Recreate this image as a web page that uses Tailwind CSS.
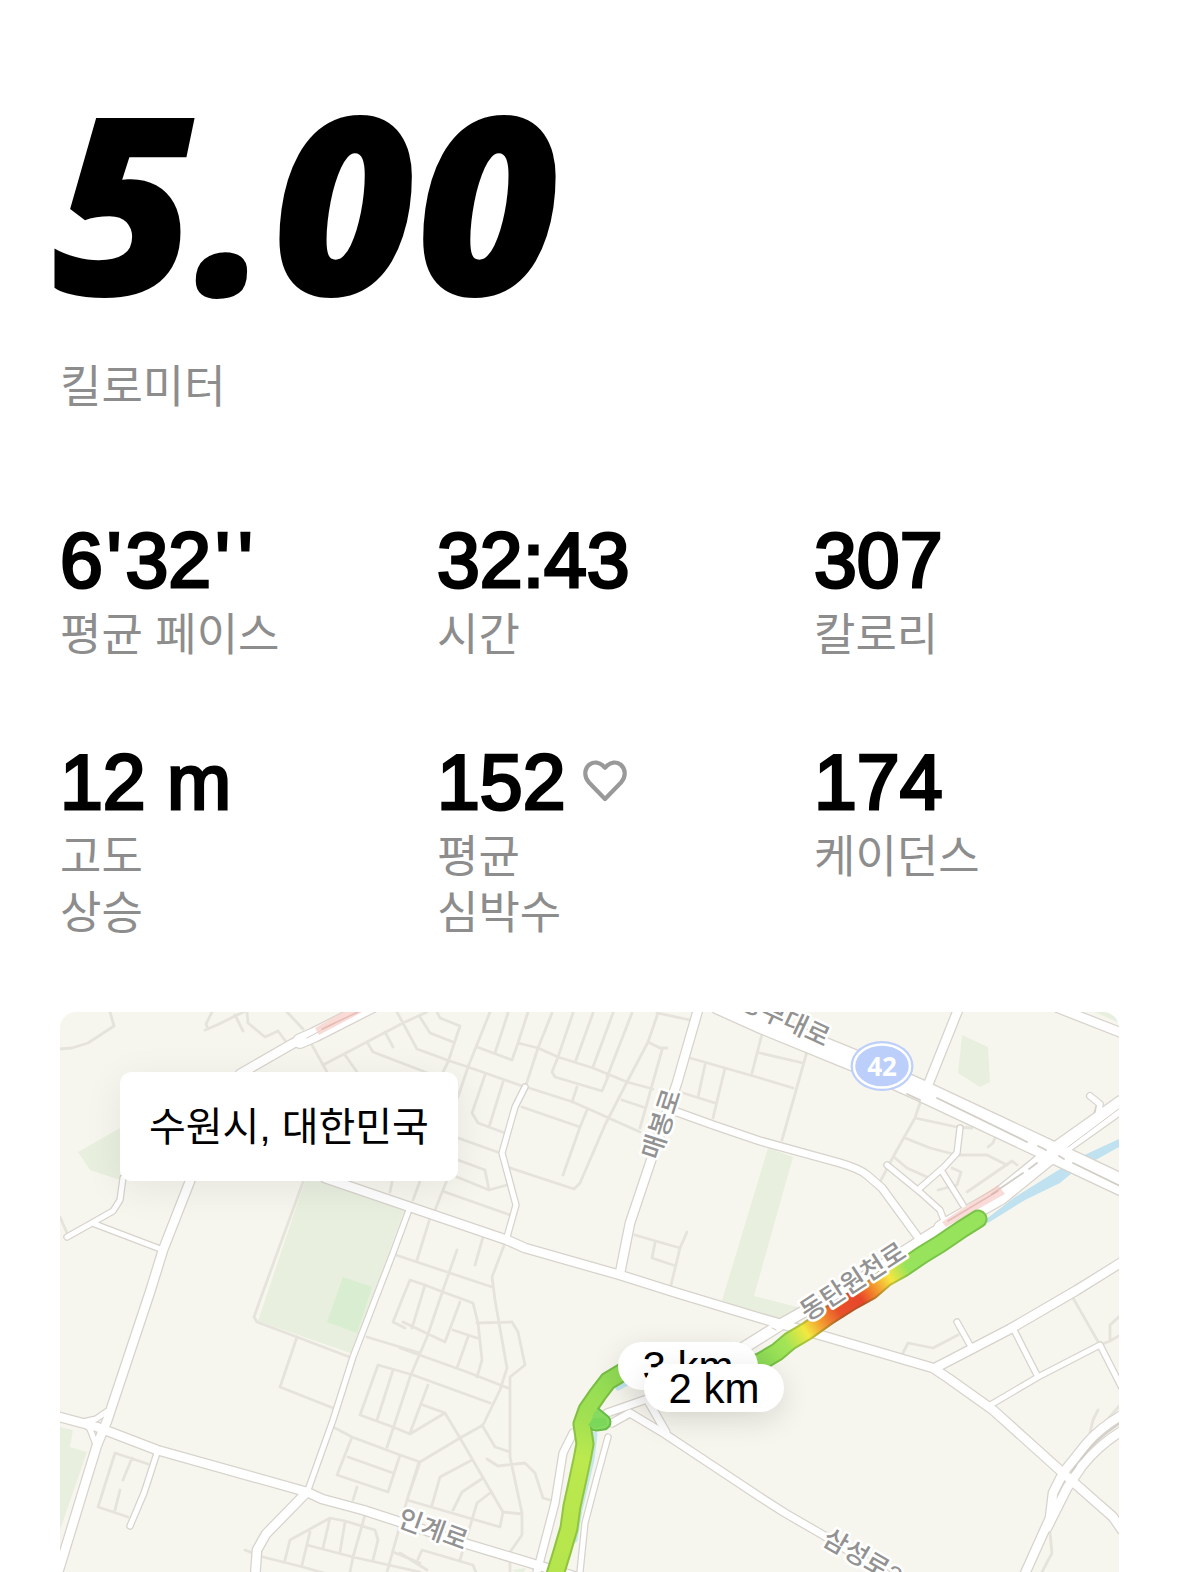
<!DOCTYPE html>
<html lang="ko">
<head>
  <meta charset="UTF-8">
  <meta name="viewport" content="width=device-width, initial-scale=1">
  <title>5.00 킬로미터</title>
  <script src="https://cdn.jsdelivr.net/npm/@tailwindcss/browser@4"></script>
</head>
<body class="bg-white text-black font-['Liberation_Sans','Noto_Sans_CJK_KR',sans-serif]">
  <main class="min-h-screen flex flex-col px-15 pt-28">

    <!-- Distance -->
    <header class="flex flex-col gap-18">
      <h1 class="-ml-2 text-[248px] leading-[176px] font-black italic font-['Noto_Sans',sans-serif]">5.00</h1>
      <p class="text-[45px] leading-14 text-[#8d8d8d]">킬로미터</p>
    </header>

    <!-- Stats -->
    <dl class="mt-27 grid grid-cols-3 gap-x-18 gap-y-[82px]">
      <div class="flex flex-col gap-3">
        <dd class="text-[77px] leading-18 whitespace-nowrap [-webkit-text-stroke:3px_black]">6<span class="mx-1">'</span>32<span class="mx-1">'</span><span class="mx-1">'</span></dd>
        <dt class="text-[45px] leading-14 text-[#8d8d8d]">평균 페이스</dt>
      </div>
      <div class="flex flex-col gap-3">
        <dd class="text-[77px] leading-18 whitespace-nowrap [-webkit-text-stroke:3px_black]">32:43</dd>
        <dt class="text-[45px] leading-14 text-[#8d8d8d]">시간</dt>
      </div>
      <div class="flex flex-col gap-3">
        <dd class="text-[77px] leading-18 whitespace-nowrap [-webkit-text-stroke:3px_black]">307</dd>
        <dt class="text-[45px] leading-14 text-[#8d8d8d]">칼로리</dt>
      </div>
      <div class="flex flex-col gap-3">
        <dd class="text-[77px] leading-18 whitespace-nowrap [-webkit-text-stroke:3px_black]">12 m</dd>
        <dt class="text-[45px] leading-14 text-[#8d8d8d]">고도<br>상승</dt>
      </div>
      <div class="flex flex-col gap-3">
        <dd class="flex items-center gap-4 text-[77px] leading-18 whitespace-nowrap [-webkit-text-stroke:3px_black]">
          152
          <svg class="size-12" viewBox="0 0 48 48" fill="none" stroke="#999" stroke-width="4.2" stroke-linejoin="round" aria-hidden="true">
            <path d="M24 41 L8 24.500 C2.500 18.500 3.500 10.500 8.500 6.500 C13 3.200 18.500 4.200 22 7.800 L24 9.800 L26 7.800 C29.500 4.200 35 3.200 39.500 6.500 C44.500 10.500 45.500 18.500 40 24.500 Z" />
          </svg>
        </dd>
        <dt class="text-[45px] leading-14 text-[#8d8d8d]">평균<br>심박수</dt>
      </div>
      <div class="flex flex-col gap-3">
        <dd class="text-[77px] leading-18 whitespace-nowrap [-webkit-text-stroke:3px_black]">174</dd>
        <dt class="text-[45px] leading-14 text-[#8d8d8d]">케이던스</dt>
      </div>
    </dl>

    <!-- Route map -->
    <section class="relative mt-[70px] flex-1 min-h-[550px] overflow-hidden rounded-t-2xl bg-[#f7f6ee]">
      <svg class="absolute inset-0 size-full" viewBox="0 2 1059 566" preserveAspectRatio="xMinYMin slice" fill="none" stroke-linecap="round" stroke-linejoin="round">
        <defs>
          <path id="wide" d="M180 64 L232 34 L300 0 M160 80 L130 171 L103 240 L90 282 L47 411 L37 435 L-3 566 M265 168 L350 197 L447 230 L465 238 L560 265 L617 283 L700 308 L767 327 L873 358 L888 368 L933 400 L1003 463 L1053 507 L1062 520 M-4 406 L37 417 L97 440 L247 482 L262 489 L303 500 L340 512 L407 534 L477 555 L520 568 M247 482 L206 524 L197 540 L195 568 M638 0 L617 73 L570 213 L560 263 M868 75 L898 0 M998 -2 L1062 23 M1062 252 L1017 280 L950 319 L877 357 M1062 405 Q1040 418 1027 433 L1003 463 L993 483 L990 508 L963 568 M1062 421 Q1040 434 1022 456 L1007 478 L987 518" />
          <path id="medium" d="M617 102 L653 115 L700 131 L780 153 Q800 159 807 165 L822 178 L860 230 M513 423 L503 443 L495 493 L477 562 M547 403 L587 389 L606 422 M552 413 L570 403 L605 424 L700 487 L725 503 L763 525 L860 585" />
          <path id="narrow" d="M350 197 L333 243 L293 347 L273 410 L248 480 M465 77 L455 97 L442 143 L456 195 L447 227 M897 312 L910 335 M953 318 L978 367 M927 397 L978 367 L1040 335 L1062 378 M63 168 L60 190 L53 201 L32 213 L7 227 M32 213 L103 240 M97 443 L84 483 L70 516 M900 118 L897 143 L884 157 L860 178 M827 155 L860 182 L880 200 L883 208 M883 163 L903 195 M548 427 L537 467 L525 513 L520 562 M23 412 L36 409 L46 402 M23 412 L30 419 L35 432" />
          <linearGradient id="paceTop" gradientUnits="userSpaceOnUse" x1="918" y1="208" x2="707" y2="350">
            <stop offset="0" stop-color="#97e35b" />
            <stop offset="0.34" stop-color="#97e35b" />
            <stop offset="0.42" stop-color="#f6e63f" />
            <stop offset="0.5" stop-color="#f28a2c" />
            <stop offset="0.56" stop-color="#e8462a" />
            <stop offset="0.66" stop-color="#e8502a" />
            <stop offset="0.74" stop-color="#f39a30" />
            <stop offset="0.81" stop-color="#f2e83f" />
            <stop offset="0.9" stop-color="#a4e455" />
            <stop offset="1" stop-color="#90de58" />
          </linearGradient>
          <linearGradient id="paceDown" gradientUnits="userSpaceOnUse" x1="560" y1="360" x2="497" y2="562">
            <stop offset="0" stop-color="#8fdc55" />
            <stop offset="0.25" stop-color="#a0e052" />
            <stop offset="0.45" stop-color="#bbe94e" />
            <stop offset="1" stop-color="#b5e54c" />
          </linearGradient>
          <path id="runTop" d="M918 209 L902 219 L880 234 L862 245 L843 258 L825 268 L810 281 L790 292 L768 306 L747 321 L730 331 L717 342 L700 352 L660 362" />
          <path id="runDown" d="M600 350 L563 362 L548 371 L538 384 L527 400 L522 414 L525 434 L522 450 L516 478 L512 496 L509 518 L502 542 L494 568" />
        </defs>

        <!-- Parks -->
        <g fill="#e8efdf">
          <path d="M18 142 L60 118 V170 L30 160 Z" />
          <path d="M245 171 H272 L345 198 L328 245 L293 344 L198 311 Z" />
          <path d="M708 138 L733 147 L694 286 L745 299 L725 315 L660 297 Z" />
          <path d="M902 25 L928 37 L930 72 L920 77 L898 63 Z" />
          <path d="M0 417 L13 420 L10 437 L27 442 L0 520 Z" />
          <path d="M1030 0 H1062 V14 Z" />
          <path d="M452 560 L466 558 L462 566 Z" />
        </g>
        <path fill="#d9edd1" d="M283 267 L312 277 L297 323 L267 312 Z" />

        <!-- Water -->
        <path fill="#bfe1f0" d="M1059 129 L1020 147 L992 164 L955 187 L925 210 L928 213 L965 190 L1000 173 L1012 163 L1059 137 Z" />
        <path stroke="#c3e6f0" stroke-width="5" d="M575 369 L558 378 M535 424 L532 450 L520 500 L515 530" />

        <!-- Side streets -->
        <path stroke="#e5e3db" stroke-width="2.800" d="M0 39 L12 38 L28 33 L54 16 L50 2 M145 20 L157 15 L177 5 L184 2 M148 19 L146 14 L152 2 M175 5 L183 21 M187 2 L188 13 L205 27 L218 21 L227 33 M227 2 L243 19 M252 35 L267 62 M263 55 L343 13 L367 2 M285 45 L297 62 M307 32 L313 42 L360 60 L375 66 M325 22 L333 37 M337 2 L357 39 L387 50 L408 57 L465 77 M360 7 L370 23 L393 32 M377 2 L380 8 L400 16 L388 52 L383 62
          M430 2 L408 57 L398 87 M417 37 L452 50 L458 33 L468 2 M448 3 L435 43 M492 3 L478 38 L466 75 M458 33 L478 38 L498 47 L533 58 L567 72 L593 79 M513 3 L498 47 L492 62 L495 67 L542 81 L548 67 M533 3 L516 50 M553 3 L533 57 M572 3 L547 67 M598 3 L588 32 L567 72 L545 115 L520 173 L514 179 L447 157 M597 3 L630 10 M588 32 L600 38 L607 38 M602 40 L580 118 M466 77 L513 92 L580 122 M517 77 L512 92 M562 90 L583 97 M462 97 L520 117 L503 165 M527 100 L520 117
          M425 65 L412 103 L418 113 L445 123 M443 72 L429 117 M398 128 L440 143 M398 150 L425 160 L429 180 L447 175 M397 167 L429 180 M387 170 L375 200 M360 171 L353 190 M385 182 L450 205 M332 172 L330 182 M370 208 L357 250 M423 227 L415 255 M445 233 L432 267 L435 290 L447 358 L440 380 L423 415 L400 428 L360 452 L340 445 M397 240 L383 280 L367 327 L350 367 L327 437 M336 245 L390 263 L432 277
          M365 275 L352 318 M343 312 L385 332 L400 292 M345 318 L333 312 L343 287 L350 270 L365 275 L383 282 L413 293 L418 313 L422 350 L417 367 M393 320 L417 328 M408 327 L397 358 M307 327 L360 343 M340 338 L407 362 L448 378 M417 313 L452 312 L458 322 L465 355 L450 367 L450 447 L462 503 L462 525 L450 542 M318 355 L353 365 L430 393 M318 355 L300 405 L333 417 L350 424 L385 403 M333 360 L317 410 M368 375 L350 423 M363 395 L385 403 L400 428 L443 502 L440 517 L347 490 M443 502 L462 504 M360 452 L347 490
          M412 450 L380 467 L372 495 M423 468 L402 482 L393 500 M430 483 L417 493 L400 550 M422 415 L435 437 L450 442 M427 449 L438 456 L465 453 L475 463 L483 488 L490 490 M275 418 L292 427 L340 445 M292 427 L277 465 L328 482 L340 445 M288 447 L333 463 M297 477 L293 490 M359 452 L347 490 L327 562 M243 172 L200 290 L194 307 L197 312 L237 327 L292 348 M237 327 L220 377 L273 398 M88 454 L55 443 L38 497 L68 507 M72 448 L63 470 M60 480 L55 500
          M185 540 L203 547 L243 557 L267 564 M225 550 L230 530 L270 508 L285 511 L315 520 L318 530 L313 550 M247 535 L293 547 L360 562 M250 522 L242 555 M270 508 L263 538 M285 512 L280 542 M305 505 L293 547 L290 562 M333 542 L360 553 M358 549 L362 540 L413 555 L417 565 M340 543 L367 560 M450 545 V566
          M575 225 L620 238 M627 222 L620 238 L611 275 M595 233 L592 248 L613 255 M630 48 L665 58 L700 68 L733 78 M700 43 L743 53 M748 38 L722 130 M703 20 L692 63 M645 55 L638 87 M665 58 L653 108 M620 82 L655 93 M860 93 L855 108 L833 147 L820 172 M855 108 L897 117 L912 118 M845 128 L870 138 L897 145 L927 145 L947 155 M835 148 L847 158 L867 167 M935 128 L933 133 L928 137 M892 158 L901 162 L897 175 L878 180 M957 155 L952 151 L907 182
          M843 343 L848 333 L873 338 L898 325 M1013 288 L1040 335 L1050 331 L1062 324 M1050 330 L1050 315 L1062 304 M1038 400 L1033 410 L1030 423 M1060 395 L1043 415 M990 523 L992 543 L982 562 M0 207 L7 223" />

        <!-- Road casings -->
        <g stroke="#d7d3cc">
          <use href="#narrow" stroke-width="7.500" />
          <use href="#medium" stroke-width="9.500" />
          <use href="#wide" stroke-width="11" />
          <path stroke-width="16" d="M240 31 L254 25 L315 -6" />
          <path stroke-width="23" d="M660 -6 L700 12 L793 50 L860 80 L992 142 L1062 175" />
          <path stroke-width="19" d="M1062 94 L993 143 L940 186 L882 219" />
          <path stroke-width="13" d="M875 222 L800 270 L720 315 L640 365" />
          <path stroke-width="8" d="M1030 86 L1040 94 L1036 108" />
        </g>
        <!-- Road surfaces -->
        <g stroke="#fff">
          <use href="#narrow" stroke-width="5" />
          <use href="#medium" stroke-width="7" />
          <use href="#wide" stroke-width="8.500" />
          <path stroke-width="13.500" d="M240 31 L254 25 L315 -6" />
          <path stroke-width="20.500" d="M660 -6 L700 12 L793 50 L860 80 L992 142 L1062 175" />
          <path stroke-width="16.500" d="M1062 94 L993 143 L940 186 L882 219" />
          <path stroke-width="10.500" d="M875 222 L800 270 L720 315 L640 365" />
          <path stroke-width="5.500" d="M1030 86 L1040 94 L1038 106" />
        </g>
        <!-- Medians -->
        <g stroke="#d2cec7" stroke-width="1.800">
          <path d="M847 84 L860 90 M877 88 L967 132 M978 136 L986 140 M999 146 L1004 149 M1013 153 L1060 176 M969 159 L977 153 M963 163 L932 184 M1012 461 L1016 456 M1021 449 Q1036 429 1059 414" />
          <path stroke-width="1" d="M1008 137 L1060 98 M247 28 L275 13 M712 318 L716 320" />
        </g>
        <path fill="#f3b9b2" fill-opacity="0.500" d="M882 212 L938 175 L945 184 L886 217 Z" />
        <path fill="#f6ccc4" fill-opacity="0.700" d="M255 18 L286 0 H306 L259 25 Z" />
        <path stroke="#d8a9a4" stroke-opacity="0.600" stroke-width="1.500" d="M262 19 L298 2 M888 211 L938 181" />

        <!-- Run -->
        <g stroke-width="19">
          <use href="#runDown" stroke="url(#paceDown)" />
          <use href="#runTop" stroke="url(#paceTop)" />
        </g>
        <g stroke="#2d6b1c" stroke-opacity="0.280" stroke-width="19">
          <use href="#runDown" />
          <use href="#runTop" />
        </g>
        <path stroke="#68bc48" stroke-width="17" d="M532 403 L543 412 L536 413" />
        <path stroke="#86da60" stroke-width="13" d="M532 403 L543 412 L536 413" />
        <use href="#runDown" stroke="url(#paceDown)" stroke-width="15" />
        <use href="#runTop" stroke="url(#paceTop)" stroke-width="15" />
        <path fill="#7ad759" d="M534 408 L546 408 L547 415 L536 418 L528 415 Z" />

        <!-- Road names -->
        <g class="text-[26px] font-medium" fill="#929292" stroke="#fff" stroke-width="5" paint-order="stroke" text-anchor="middle">
          <text transform="translate(610 117) rotate(-72)">매봉로</text>
          <text transform="translate(798 279) rotate(-33)">동탄원천로</text>
          <text transform="translate(370 528) rotate(20)">인계로</text>
          <text transform="translate(798 555) rotate(30)">삼성로2</text>
          <text transform="translate(721 17) rotate(25)">중부대로</text>
        </g>

        <!-- Route shield -->
        <ellipse cx="822" cy="56" rx="31.500" ry="25" fill="#bccffb" />
        <ellipse cx="822" cy="56" rx="28" ry="21.500" stroke="#fff" stroke-width="2.500" />
        <text class="text-[26px] font-bold font-['Noto_Sans']" x="822" y="66" fill="#fff" text-anchor="middle">42</text>
      </svg>

      <p class="absolute left-15 top-15 rounded-xl bg-white px-[29px] pt-[25px] pb-6 text-[40px] leading-15 shadow-[0_8px_40px_rgba(0,0,0,0.07)]">수원시, 대한민국</p>

      <span class="absolute left-[558px] top-[330px] flex h-12 w-35 items-center justify-center rounded-full bg-white text-[42px] shadow-[0_8px_30px_rgba(0,0,0,0.12)]">3 km</span>
      <span class="absolute left-[584px] top-[352px] flex h-12 w-35 items-center justify-center rounded-full bg-white text-[42px] shadow-[0_8px_30px_rgba(0,0,0,0.12)]">2 km</span>
    </section>
  </main>
</body>
</html>
